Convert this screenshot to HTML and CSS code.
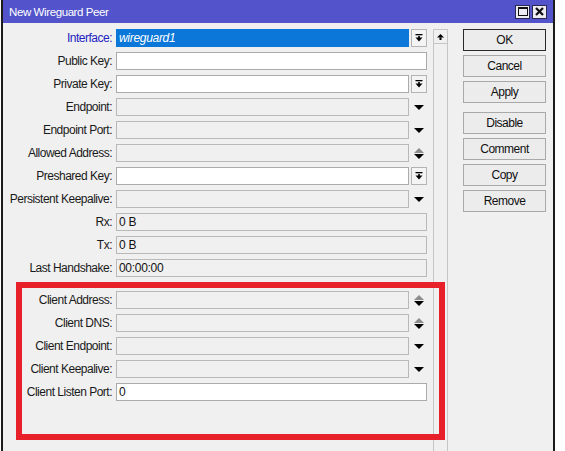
FILE: index.html
```html
<!doctype html>
<html lang="en">
  <head>
    <meta charset="UTF-8" />
    <meta name="viewport" content="width=device-width, initial-scale=1.0" />
    <title>New Wireguard Peer</title>
    <link rel="stylesheet" href="styles.css">
  </head>
  <body>
    <div class="window">
      <div class="titlebar">
        <span class="title">New Wireguard Peer</span>
        <div class="title-buttons">
          <span class="tbtn">
            <svg width="10" height="9" viewBox="0 0 10 9"><rect x="0.5" y="0.5" width="9" height="8" fill="none" stroke="#111" /><rect x="0" y="0" width="10" height="2" fill="#111" /></svg>
          </span>
          <span class="tbtn">
            <svg width="9" height="9" viewBox="0 0 9 9"><path d="M1 1 L8 8 M8 1 L1 8" stroke="#111" stroke-width="2.2" /></svg>
          </span>
        </div>
      </div>

      <div class="content">
        <div class="form">
          <div class="row">
            <label class="lbl lbl-active">Interface:</label>
            <div class="field field-selected">wireguard1</div>
            <span class="combo">
              <svg width="8" height="8" viewBox="0 0 8 8"><rect x="0.5" y="0" width="7" height="1.3" /><rect x="3" y="2.2" width="2" height="1.6" /><polygon points="0.5,3.6 7.5,3.6 4,7.6" /></svg>
            </span>
          </div>
          <div class="row">
            <label class="lbl">Public Key:</label>
            <div class="field"></div>
          </div>
          <div class="row">
            <label class="lbl">Private Key:</label>
            <div class="field"></div>
            <span class="combo">
              <svg width="8" height="8" viewBox="0 0 8 8"><rect x="0.5" y="0" width="7" height="1.3" /><rect x="3" y="2.2" width="2" height="1.6" /><polygon points="0.5,3.6 7.5,3.6 4,7.6" /></svg>
            </span>
          </div>
          <div class="row">
            <label class="lbl">Endpoint:</label>
            <div class="field field-off"></div>
            <span class="arrow">
              <svg width="10" height="5" viewBox="0 0 10 5"><polygon points="0,0 10,0 5,5" /></svg>
            </span>
          </div>
          <div class="row">
            <label class="lbl">Endpoint Port:</label>
            <div class="field field-off"></div>
            <span class="arrow">
              <svg width="10" height="5" viewBox="0 0 10 5"><polygon points="0,0 10,0 5,5" /></svg>
            </span>
          </div>
          <div class="row">
            <label class="lbl">Allowed Address:</label>
            <div class="field field-off"></div>
            <span class="arrow">
              <svg width="10" height="11" viewBox="0 0 10 11"><polygon points="0,5 10,5 5,0" fill="#8c8c8c" /><polygon points="0,6 10,6 5,11" /></svg>
            </span>
          </div>
          <div class="row">
            <label class="lbl">Preshared Key:</label>
            <div class="field"></div>
            <span class="combo">
              <svg width="8" height="8" viewBox="0 0 8 8"><rect x="0.5" y="0" width="7" height="1.3" /><rect x="3" y="2.2" width="2" height="1.6" /><polygon points="0.5,3.6 7.5,3.6 4,7.6" /></svg>
            </span>
          </div>
          <div class="row">
            <label class="lbl">Persistent Keepalive:</label>
            <div class="field field-off"></div>
            <span class="arrow">
              <svg width="10" height="5" viewBox="0 0 10 5"><polygon points="0,0 10,0 5,5" /></svg>
            </span>
          </div>
          <div class="row">
            <label class="lbl">Rx:</label>
            <div class="field field-off">0 B</div>
          </div>
          <div class="row">
            <label class="lbl">Tx:</label>
            <div class="field field-off">0 B</div>
          </div>
          <div class="row">
            <label class="lbl">Last Handshake:</label>
            <div class="field field-off">00:00:00</div>
          </div>

          <div class="row row-group">
            <label class="lbl">Client Address:</label>
            <div class="field field-off"></div>
            <span class="arrow">
              <svg width="10" height="11" viewBox="0 0 10 11"><polygon points="0,5 10,5 5,0" fill="#8c8c8c" /><polygon points="0,6 10,6 5,11" /></svg>
            </span>
          </div>
          <div class="row">
            <label class="lbl">Client DNS:</label>
            <div class="field field-off"></div>
            <span class="arrow">
              <svg width="10" height="11" viewBox="0 0 10 11"><polygon points="0,5 10,5 5,0" fill="#8c8c8c" /><polygon points="0,6 10,6 5,11" /></svg>
            </span>
          </div>
          <div class="row">
            <label class="lbl">Client Endpoint:</label>
            <div class="field field-off"></div>
            <span class="arrow">
              <svg width="10" height="5" viewBox="0 0 10 5"><polygon points="0,0 10,0 5,5" /></svg>
            </span>
          </div>
          <div class="row">
            <label class="lbl">Client Keepalive:</label>
            <div class="field field-off"></div>
            <span class="arrow">
              <svg width="10" height="5" viewBox="0 0 10 5"><polygon points="0,0 10,0 5,5" /></svg>
            </span>
          </div>
          <div class="row">
            <label class="lbl">Client Listen Port:</label>
            <div class="field">0</div>
          </div>
        </div>

        <div class="scroll">
          <span class="scroll-up">
            <svg width="7" height="6" viewBox="0 0 7 6"><polygon points="0,3.6 7,3.6 3.5,0" /><rect x="2.5" y="3.4" width="2" height="2.6" /></svg>
          </span>
        </div>

        <div class="actions">
          <button class="btn btn-default">OK</button>
          <button class="btn">Cancel</button>
          <button class="btn">Apply</button>
          <button class="btn btn-gap">Disable</button>
          <button class="btn">Comment</button>
          <button class="btn">Copy</button>
          <button class="btn">Remove</button>
        </div>
      </div>

      <div class="highlight"></div>
    </div>
  </body>
</html>
```

FILE: styles.css
```css
body {
  margin: 0;
  padding: 0;
  background-color: #fff;
  font-family: "Liberation Sans", Arial, sans-serif;
  font-size: 12px;
  color: #111;
}
.window {
  position: relative;
  width: 550px;
  height: 451px;
  margin-left: 1px;
  border-left: 2px solid #1c1c1c;
  border-right: 2px solid #1c1c1c;
  background-color: #f0f0f0;
  box-sizing: content-box;
  overflow: hidden;
}
.titlebar {
  display: flex;
  align-items: center;
  height: 23px;
  margin-left: -2px;
  margin-right: -2px;
  padding-left: 8px;
  background-color: #5353cb;
  color: #fff;
  font-size: 11.5px;
  letter-spacing: -0.4px;
}
.title {
  flex: 1;
}
.title-buttons {
  display: flex;
  gap: 2px;
  margin-right: 8px;
}
.tbtn {
  display: flex;
  align-items: center;
  justify-content: center;
  width: 13px;
  height: 12px;
  background-color: #ececf2;
  border: 1px solid #2a2a50;
}
.content {
  display: flex;
  align-items: stretch;
  height: 428px;
  padding-top: 6px;
}
.form {
  width: 423px;
  margin-left: 1px;
}
.row {
  display: flex;
  align-items: center;
  height: 18px;
  margin-bottom: 5px;
}
.row-group {
  margin-top: 14px;
}
.lbl {
  width: 108px;
  margin-right: 4px;
  text-align: right;
  white-space: nowrap;
  letter-spacing: -0.5px;
  color: #1a1a1a;
}
.lbl-active {
  color: #2323c2;
}
.field {
  flex: 1;
  height: 18px;
  box-sizing: border-box;
  padding-left: 2px;
  line-height: 16px;
  background-color: #fff;
  border: 1px solid #ababab;
  letter-spacing: -0.3px;
  white-space: nowrap;
}
.field-off {
  background-color: #f0f0f0;
  border-color: #b9b9b9;
}
.field-selected {
  background-color: #0b77d8;
  border-color: #0b77d8;
  color: #fff;
  font-style: italic;
}
.combo,
.arrow {
  display: flex;
  align-items: center;
  justify-content: center;
  width: 16px;
  height: 18px;
  margin-left: 2px;
  box-sizing: border-box;
}
.combo {
  border: 1px solid #b4b4b4;
  background-color: #f4f4f4;
}
.scroll {
  width: 13px;
  margin-left: 6px;
  border: 1px solid #c6c6c6;
  border-bottom: none;
}
.scroll-up {
  display: flex;
  align-items: center;
  justify-content: center;
  height: 13px;
  border-bottom: 1px solid #c6c6c6;
}
.actions {
  display: flex;
  flex-direction: column;
  margin-left: 15px;
  width: 83px;
}
.btn {
  height: 22px;
  margin: 0 0 4px 0;
  padding: 0;
  font-family: inherit;
  font-size: 12px;
  letter-spacing: -0.5px;
  color: #111;
  background-color: #ececec;
  border: 1px solid #a9a9a9;
}
.btn-default {
  border-color: #2a2a2a;
}
.btn-gap {
  margin-top: 5px;
}
.highlight {
  position: absolute;
  left: 13px;
  top: 282px;
  width: 417px;
  height: 146px;
  border: 6px solid #e8202a;
}
```
